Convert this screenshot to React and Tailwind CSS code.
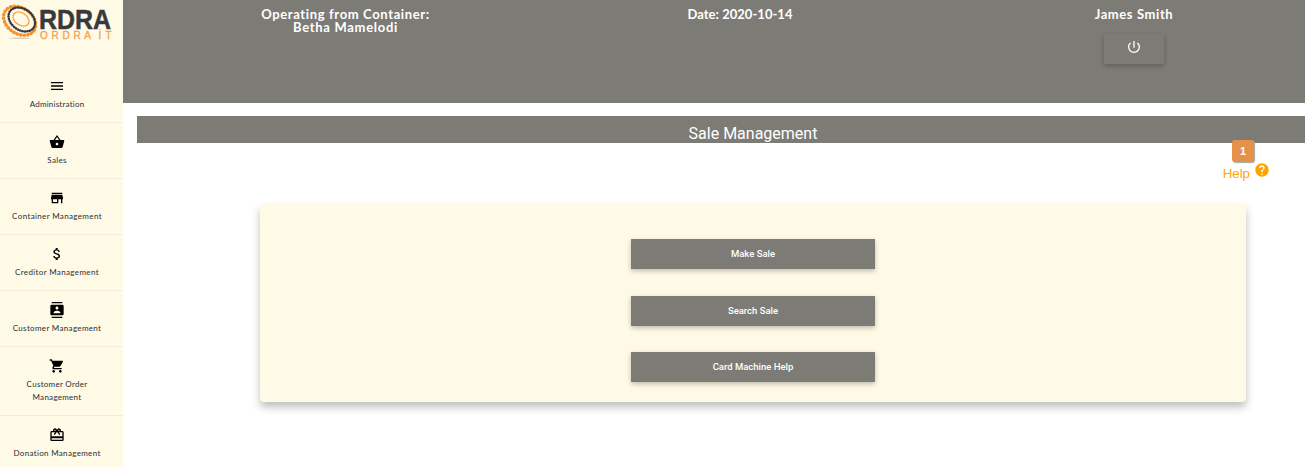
import React from "react";
import {
  MdMenu,
  MdShoppingBasket,
  MdStore,
  MdAttachMoney,
  MdContacts,
  MdShoppingCart,
  MdRedeem,
  MdPowerSettingsNew,
  MdHelp,
} from "react-icons/md";

const NAV = [
  { icon: MdMenu, lines: ["Administration"], spacing: "tracking-[0.22px]" },
  { icon: MdShoppingBasket, lines: ["Sales"], spacing: "tracking-[0.3px]" },
  { icon: MdStore, lines: ["Container Management"], spacing: "tracking-[0.36px]" },
  { icon: MdAttachMoney, lines: ["Creditor Management"], spacing: "tracking-[0.36px]" },
  { icon: MdContacts, lines: ["Customer Management"], spacing: "tracking-[0.33px]" },
  { icon: MdShoppingCart, lines: ["Customer Order", "Management"], spacing: "tracking-[0.28px]" },
  { icon: MdRedeem, lines: ["Donation Management"], spacing: "tracking-[0.33px]" },
];

const ACTIONS = [
  { label: "Make Sale", gap: "mb-[27px]" },
  { label: "Search Sale", gap: "mb-[26px]" },
  { label: "Card Machine Help", gap: "" },
];

function Logo() {
  return (
    <svg width="123" height="48" viewBox="0 0 123 48" className="block shrink-0">
      <ellipse cx="20" cy="38.3" rx="11" ry="0.8" fill="#d5d0c2" />
      <g fill="none" strokeLinecap="round">
        <ellipse cx="19.6" cy="20.8" rx="17.4" ry="12.8" transform="rotate(35 19.6 20.8)" stroke="#f7922a" strokeWidth="3.6" strokeDasharray="0.2 3.4" />
        <ellipse cx="21.8" cy="19.5" rx="14.4" ry="10.6" transform="rotate(35 21.8 19.5)" stroke="#3a3a3c" strokeWidth="2.5" strokeDasharray="0.2 2.2" />
        <ellipse cx="21" cy="19" rx="8.8" ry="6" transform="rotate(35 21 19)" stroke="#f7a03c" strokeWidth="1.6" strokeDasharray="0.2 1.6" />
      </g>
      <text x="39" y="28.6" textLength="72" lengthAdjust="spacingAndGlyphs" fill="#39393b" stroke="#39393b" strokeWidth="0.5" className="font-['Liberation_Sans',sans-serif] text-[28px] leading-none font-bold">
        RDRA
      </text>
      <text x="40" y="38.7" textLength="51" fill="#f5a04b" stroke="#f5a04b" strokeWidth="0.3" className="font-['Liberation_Sans',sans-serif] text-[10px] leading-none">
        ORDRA
      </text>
      <text x="98.5" y="38.7" textLength="13" fill="#f5a04b" stroke="#f5a04b" strokeWidth="0.3" className="font-['Liberation_Sans',sans-serif] text-[10px] leading-none">
        İT
      </text>
    </svg>
  );
}

function NavItem({ icon: Icon, lines, spacing }) {
  return (
    <a className="flex shrink-0 flex-col items-center border-b border-[#f4ebdb] pt-[11px] pr-[9px] pb-[5px]">
      <Icon className="size-4 text-black" />
      <span className={`mt-1 mb-1.5 text-center text-[8px] leading-[13px] whitespace-nowrap text-[#2d2d33] ${spacing}`}>
        {lines.map((line) => (
          <span key={line} className="block">
            {line}
          </span>
        ))}
      </span>
    </a>
  );
}

export default function App() {
  return (
    <div className="flex h-[467px] w-full overflow-hidden bg-white font-['Liberation_Sans',sans-serif]">
      <aside className="flex w-[123px] shrink-0 flex-col overflow-hidden bg-[#fffae6] font-['Lato',sans-serif]">
        <Logo />
        <nav className="mt-[19px] flex flex-col">
          {NAV.map((item) => (
            <NavItem key={item.lines[0]} {...item} />
          ))}
        </nav>
      </aside>

      <div className="flex min-w-0 flex-1 flex-col">
        <header className="flex h-[103px] shrink-0 bg-[#7d7b76] pt-2 pl-[25px] text-center font-['Lato',sans-serif] text-[13px] leading-[13px] font-bold text-white">
          <div className="w-[395px] shrink-0">
            <p className="tracking-[0.64px]">Operating from Container:</p>
            <p className="tracking-[0.7px]">Betha Mamelodi</p>
          </div>
          <div className="w-[394px] shrink-0">
            <p className="tracking-[0.03px]">Date: 2020-10-14</p>
          </div>
          <div className="flex w-[394px] shrink-0 flex-col items-center">
            <p className="tracking-[0.6px]">James Smith</p>
            <button className="mt-[13px] flex h-[30px] w-[60px] items-center justify-center rounded-[1px] pb-1 shadow-[0_2px_5px_rgba(0,0,0,0.16),0_2px_5px_rgba(0,0,0,0.08)]">
              <MdPowerSettingsNew className="size-4" />
            </button>
          </div>
        </header>

        <main className="flex flex-col pt-[13px] pl-[14px]">
          <h1 className="h-[27px] bg-[#7d7b76] pr-px pl-[65px] text-center font-['Roboto',sans-serif] text-base leading-[35px] text-white">
            Sale Management
          </h1>

          <div className="relative flex h-[61px] items-start justify-end pt-[20px] pr-[35px] text-[#ffa500]">
            <span className="mt-[3px] mr-[4px] text-[13.3px] leading-4">Help</span>
            <MdHelp className="-mt-px size-4" />
            <span className="absolute -top-[3px] right-[51px] flex size-[22px] items-center justify-center rounded-[3px] bg-[#e69148] text-[11px] font-bold text-white shadow-[1px_1px_1px_#a6a6a6]">
              1
            </span>
          </div>

          <section className="ml-[123px] flex h-[198px] w-[986px] flex-col items-center rounded-[4px] bg-[#fffae6] pt-[35px] shadow-[0_5px_8px_rgba(0,0,0,0.26)]">
            {ACTIONS.map(({ label, gap }) => (
              <button
                key={label}
                className={`h-[30px] w-[244px] shrink-0 bg-[#7d7b76] font-['Roboto',sans-serif] text-[9.5px] font-medium text-white shadow-[0_2px_5px_rgba(0,0,0,0.25)] ${gap}`}
              >
                {label}
              </button>
            ))}
          </section>
        </main>
      </div>
    </div>
  );
}
